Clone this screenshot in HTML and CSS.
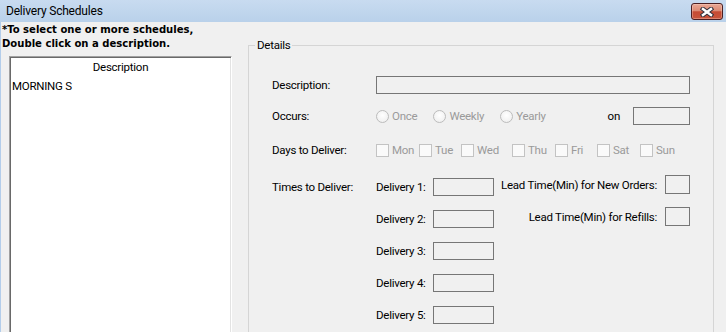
FILE: index.html
```html
<!DOCTYPE html>
<html>
<head>
<meta charset="utf-8">
<title>Delivery Schedules</title>
<link rel="stylesheet" href="styles.css">
</head>
<body>
<div class="window">
  <div class="titlebar">
    <span class="title">Delivery Schedules</span>
    <span class="close">
      <svg width="14" height="10" viewBox="0 0 14 10">
        <path d="M3 2 L11 8 M11 2 L3 8" stroke="#2e2e3a" stroke-width="4.5" stroke-linecap="square" fill="none"/>
        <path d="M3 2 L11 8 M11 2 L3 8" stroke="#ffffff" stroke-width="2.5" stroke-linecap="square" fill="none"/>
      </svg>
    </span>
  </div>
  <div class="client">
    <div class="left">
      <div class="hint">*To select one or more schedules,<br>Double click on a description.</div>
      <div class="listbox">
        <div class="lb-head">Description</div>
        <div class="lb-item">MORNING S</div>
      </div>
    </div>
    <div class="group">
      <span class="legend">Details</span>
      <div class="form">
        <div class="row r-desc">
          <span class="lbl">Description:</span>
          <span class="input wide"></span>
        </div>
        <div class="row r-occurs">
          <span class="lbl">Occurs:</span>
          <span class="opt"><i class="radio"></i>Once</span>
          <span class="opt"><i class="radio"></i>Weekly</span>
          <span class="opt"><i class="radio"></i>Yearly</span>
          <span class="on">on</span>
          <span class="input on-box"></span>
        </div>
        <div class="row r-days">
          <span class="lbl">Days to Deliver:</span>
          <div class="days">
            <span class="opt"><i class="check"></i>Mon</span>
            <span class="opt"><i class="check"></i>Tue</span>
            <span class="opt"><i class="check"></i>Wed</span>
            <span class="opt"><i class="check"></i>Thu</span>
            <span class="opt"><i class="check"></i>Fri</span>
            <span class="opt"><i class="check"></i>Sat</span>
            <span class="opt"><i class="check"></i>Sun</span>
          </div>
        </div>
        <div class="times">
          <span class="lbl times-lbl">Times to Deliver:</span>
          <div class="deliveries">
            <div class="drow"><span class="dlbl">Delivery 1:</span><span class="input dbox"></span></div>
            <div class="drow"><span class="dlbl">Delivery 2:</span><span class="input dbox"></span></div>
            <div class="drow"><span class="dlbl">Delivery 3:</span><span class="input dbox"></span></div>
            <div class="drow"><span class="dlbl">Delivery 4:</span><span class="input dbox"></span></div>
            <div class="drow"><span class="dlbl">Delivery 5:</span><span class="input dbox"></span></div>
          </div>
          <div class="leads">
            <div class="lrow"><span>Lead Time(Min) for New Orders:</span><span class="input lbox"></span></div>
            <div class="lrow"><span>Lead Time(Min) for Refills:</span><span class="input lbox"></span></div>
          </div>
        </div>
      </div>
    </div>
  </div>
</div>
</body>
</html>
```
FILE: styles.css
```css
* { box-sizing: border-box; }
html, body { margin: 0; padding: 0; }
body {
  font-family: Roboto, "Noto Sans", sans-serif;
  font-size: 11.5px;
  letter-spacing: -0.25px;
  color: #000;
  background: #f0f0f0;
}
.window {
  width: 726px;
  height: 332px;
  overflow: hidden;
  background: #f0f0f0;
}
.titlebar {
  height: 22px;
  display: flex;
  align-items: center;
  justify-content: space-between;
  padding: 0 3px 0 6px;
  background: linear-gradient(#c8dbf0, #b9d1ea);
}
.title { line-height: 14px; font-size: 12px; letter-spacing: -0.2px; }
.close {
  width: 32px;
  height: 17px;
  margin-top: 1px;
  border: 1px solid #4b1f22;
  border-radius: 3px;
  background: linear-gradient(#e9a896 0%, #dc8a74 45%, #c54b34 52%, #c9553c 100%);
  box-shadow: inset 0 0 0 1px rgba(255, 220, 210, 0.35);
  display: flex;
  align-items: center;
  justify-content: center;
}
.close svg { display: block; }
.client {
  display: flex;
  height: 310px;
  border-left: 1px solid #b3cdea;
}
.left {
  width: 247px;
  flex: none;
  padding-left: 1px;
}
.hint {
  font-family: "DejaVu Sans Condensed", "DejaVu Sans", sans-serif;
  font-stretch: condensed;
  font-weight: bold;
  font-size: 11.2px;
  letter-spacing: 0;
  line-height: 14px;
  padding-top: 1px;
}
.listbox {
  margin: 5px 0 0 7px;
  width: 223px;
  height: 300px;
  background: #fff;
  border-top: 1px solid #a0a0a0;
  border-left: 1px solid #a0a0a0;
  border-right: 1px solid #fff;
  border-bottom: 1px solid #fff;
  box-shadow: inset 1px 1px 0 #696969, inset -1px -1px 0 #e3e3e3;
  padding: 3px 2px 0 2px;
}
.lb-head {
  text-align: center;
  line-height: 15px;
}
.lb-item {
  margin-top: 4px;
  line-height: 14px;
}
.group {
  position: relative;
  margin-top: 23px;
  width: 466px;
  height: 300px;
  border: 1px solid #d5d5d5;
  padding-left: 23px;
}
.legend {
  position: absolute;
  top: -8px;
  left: 6px;
  padding: 0 2px;
  line-height: 14px;
  background: #f0f0f0;
}
.form { width: 418px; }
.row {
  display: flex;
  align-items: center;
  height: 18px;
}
.lbl { width: 104px; flex: none; white-space: nowrap; }
.input {
  display: block;
  height: 18px;
  border: 1px solid #767676;
  background: #f0f0f0;
  flex: none;
}
.r-desc { margin-top: 30px; }
.wide { width: 314px; }
.r-occurs { margin-top: 13px; }
.opt {
  display: flex;
  align-items: center;
  gap: 3px;
  color: #9a9a9a;
  margin-right: 16px;
}
.radio {
  display: block;
  width: 13px;
  height: 13px;
  border-radius: 50%;
  border: 1px solid #bcbcbc;
  background: radial-gradient(circle at 50% 40%, #ffffff, #ececec);
}
.on { margin-left: auto; margin-right: 13px; }
.on-box { width: 57px; }
.r-days { margin-top: 16px; }
.days {
  display: grid;
  grid-template-columns: 43px 42px 51px 43px 42px 43px auto;
}
.days .opt { gap: 3px; margin-right: 0; }
.check {
  display: block;
  width: 13px;
  height: 13px;
  border: 1px solid #c3c3c3;
  background: #fafafa;
}
.times {
  display: flex;
  align-items: flex-start;
  margin-top: 16px;
}
.times-lbl { margin-top: 3px; line-height: 18px; }
.deliveries {
  display: flex;
  flex-direction: column;
  gap: 14px;
  padding-top: 3px;
  flex: none;
}
.drow { display: flex; align-items: center; height: 18px; }
.dlbl { width: 57px; white-space: nowrap; }
.dbox { width: 61px; }
.leads {
  margin-left: auto;
  flex: none;
  display: flex;
  flex-direction: column;
  gap: 13px;
}
.lrow {
  display: flex;
  align-items: center;
  justify-content: flex-end;
  gap: 8px;
  height: 19px;
  white-space: nowrap;
}
.lbox { width: 25px; height: 19px; }
```
